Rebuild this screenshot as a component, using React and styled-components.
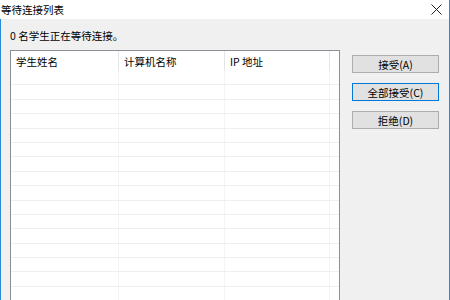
import React from 'react'
import styled, { createGlobalStyle } from 'styled-components';

const GlobalStyle = createGlobalStyle`
html, body {
  margin:0;
  padding:0;
  background:#f0f0f0;
}
body {
  font-family:"Noto Sans CJK SC", "Liberation Sans", sans-serif;
  font-size:10.5px;
  color:#000;
}
`;

const Window = styled.div`
width:450px;
height:300px;
box-sizing:border-box;
display:flex;
flex-direction:column;
overflow:hidden;
background:#f0f0f0;
border-right:1px solid #2b8ad8;
`;

const TitleBar = styled.div`
height:19px;
flex:none;
display:flex;
align-items:center;
justify-content:space-between;
background:#fff;
padding:0 6px 0 1px;
`;

const Title = styled.div`
font-size:10.5px;
line-height:19px;
color:#000;
`;

const CloseButton = styled.div`
width:12px;
height:12px;
display:flex;
align-items:center;
justify-content:center;
margin-right:1px;
`;

const Body = styled.div`
flex:1;
display:flex;
flex-direction:column;
border-left:1px solid #2b8ad8;
padding:9px 9px 0 9px;
min-height:0;
`;

const Status = styled.div`
font-size:10.5px;
line-height:16px;
height:16px;
`;

const Content = styled.div`
flex:1;
display:flex;
gap:12px;
margin-top:6px;
min-height:0;
`;

const ListBox = styled.div`
width:330px;
flex:none;
box-sizing:border-box;
background:#fff;
border:1px solid #8c8f96;
border-bottom:none;
overflow:hidden;
`;

const Grid = styled.div`
display:grid;
grid-template-columns:108px 106px 105px 1fr;
height:${({$header})=>$header ? '20px' : '14.4px'};
box-sizing:border-box;
border-bottom:1px solid ${({$header})=>$header ? '#fff' : '#efefef'};
`;

const Cell = styled.div`
box-sizing:border-box;
padding-left:5px;
font-size:10.5px;
line-height:21px;
white-space:nowrap;
border-right:1px solid ${({$header})=>$header ? '#e5e5e5' : '#f4f4f4'};
&:last-child {
  border-right:none;
}
`;

const Buttons = styled.div`
width:87px;
display:flex;
flex-direction:column;
gap:10px;
padding-top:5px;
`;

const Button = styled.div`
height:18px;
box-sizing:border-box;
display:flex;
align-items:center;
justify-content:center;
background:#e1e1e1;
border:1px solid ${({$focused})=>$focused ? '#0078d7' : '#adadad'};
font-size:10.5px;
color:#000;
`;

const columns = ["学生姓名", "计算机名称", "IP 地址", ""];
const rows = Array.from({length: 16});

const App = () => {
  return (
    <>
      <GlobalStyle/>
      <Window>
        <TitleBar>
          <Title>等待连接列表</Title>
          <CloseButton>
            <svg width="11" height="11" viewBox="0 0 11 11">
              <path d="M0.5 0.5 L10.5 10.5 M10.5 0.5 L0.5 10.5" stroke="#222" strokeWidth="1" fill="none"/>
            </svg>
          </CloseButton>
        </TitleBar>
        <Body>
          <Status>0 名学生正在等待连接。</Status>
          <Content>
            <ListBox>
              <Grid $header>
                {columns.map((c, i) => <Cell $header key={i}>{c}</Cell>)}
              </Grid>
              {rows.map((_, r) => (
                <Grid key={r}>
                  {columns.map((_, i) => <Cell key={i}/>)}
                </Grid>
              ))}
            </ListBox>
            <Buttons>
              <Button>接受(A)</Button>
              <Button $focused>全部接受(C)</Button>
              <Button>拒绝(D)</Button>
            </Buttons>
          </Content>
        </Body>
      </Window>
    </>
  )
}

export default App;
